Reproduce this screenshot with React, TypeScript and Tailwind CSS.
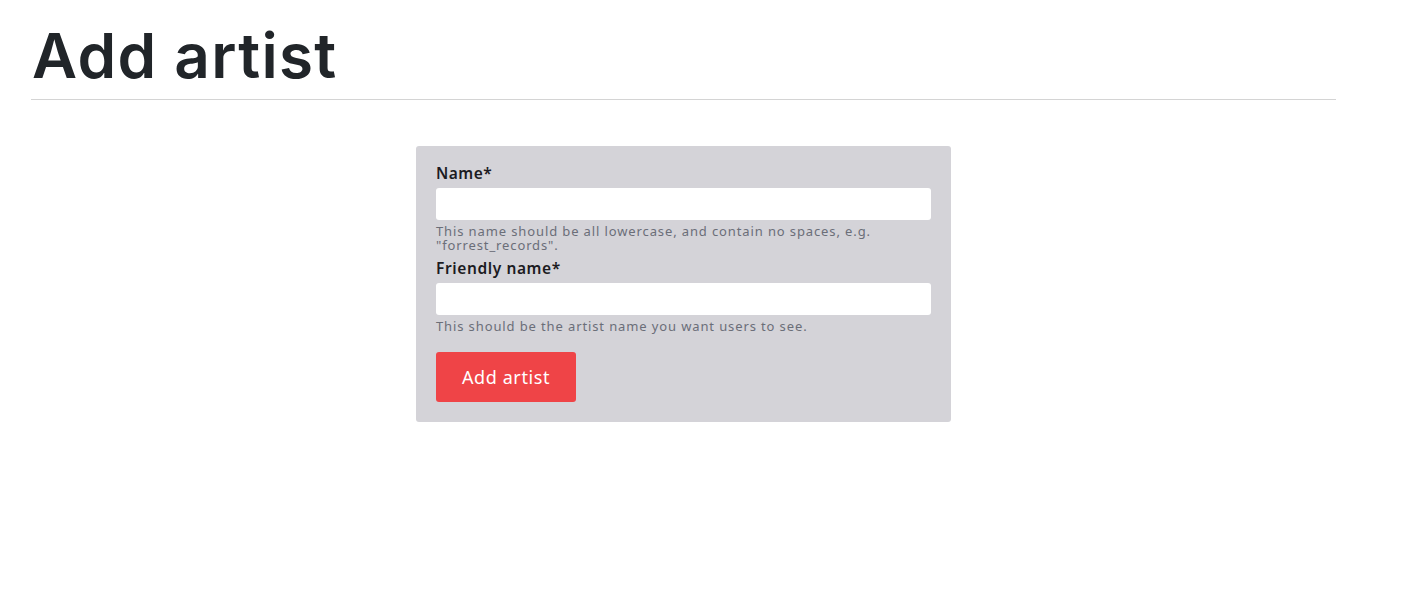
import React from "react";

export default function App() {
  return (
    <div className="min-h-screen bg-white" style={{ fontFamily: '"Noto Sans", "Open Sans", sans-serif' }}>
      <div className="ml-[31px] w-[1305px]">
        <h1
          className="pt-[18px] pb-[5px] pl-[1px] text-[62px] leading-[76px] font-semibold text-[#212529] tracking-[1.3px]"
          style={{ fontFamily: '"Inter", "Noto Sans", sans-serif' }}
        >
          Add artist
        </h1>
        <div className="h-px bg-[#d4d4d4]" />
        <div className="flex justify-center pt-[46px]">
          <form className="w-[535px] rounded-[3px] bg-[#d4d3d8] px-5 pt-[17px] pb-5">
            <label className="block text-[15.5px] leading-[20px] font-semibold text-[#1c1b22] mb-[5px] tracking-[0.5px]">Name*</label>
            <input className="block w-full h-[32px] rounded-[3px] bg-white outline-none" />
            <p className="mt-[4px] text-[13px] leading-[14px] text-[#6b6e78] tracking-[0.88px]">
              This name should be all lowercase, and contain no spaces, e.g.
              <br />
              "forrest_records".
            </p>
            <label className="mt-[6px] block text-[15.5px] leading-[20px] font-semibold text-[#1c1b22] mb-[5px] tracking-[0.6px]">Friendly name*</label>
            <input className="block w-full h-[32px] rounded-[3px] bg-white outline-none" />
            <p className="mt-[4px] text-[13px] leading-[14px] text-[#6b6e78] tracking-[0.88px]">
              This should be the artist name you want users to see.
            </p>
            <button
              type="button"
              className="mt-[19px] h-[50px] w-[140px] rounded-[3px] bg-[#ef4447] text-[18px] text-white tracking-[0.6px]"
            >
              Add artist
            </button>
          </form>
        </div>
      </div>
    </div>
  );
}
